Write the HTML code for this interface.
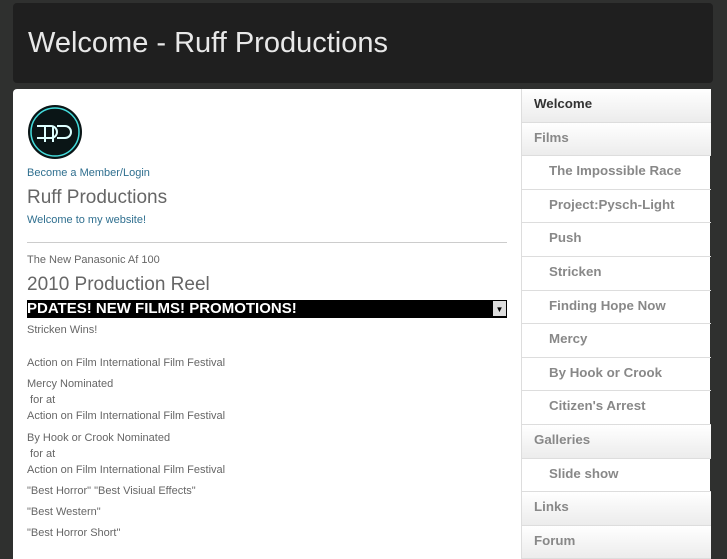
<!DOCTYPE html>
<html><head><style>
body{margin:0;width:727px;height:545px;overflow:hidden;background:#2f302f;font-family:"Liberation Sans",sans-serif;position:relative}
#hd{position:absolute;left:13px;top:3px;width:700px;height:80px;background:#1f1f1f;border-radius:4px}
#hd h1{margin:0;position:absolute;left:15px;top:24px;font-weight:normal;font-size:29px;color:#e8e8e8}
#ct{position:absolute;left:13px;top:89px;width:697px;height:470px;background:#fff;border-radius:4px 4px 0 0}
#main{position:absolute;left:14px;top:1px;width:480px;font-size:11px;color:#666}
a{color:#2f6f8f;text-decoration:none}
.t{position:absolute;left:0;white-space:nowrap}
#side{position:absolute;left:508px;top:0;width:189px;border-left:1px solid #ddd}
#side div{height:32.6px;line-height:29px;border-bottom:1px solid #ddd;font-weight:bold;font-size:13.3px;color:#888;padding-left:12px}
#side .g{background:linear-gradient(#fff,#ececec)}
#side .s{padding-left:27px}
</style></head><body>
<div id="hd"><h1>Welcome - Ruff Productions</h1></div>
<div id="ct">
<div id="main">
<svg class="t" style="top:14px" width="56" height="56" viewBox="0 0 56 56"><circle cx="28" cy="28" r="27" fill="#0a1516"/><circle cx="28" cy="28" r="24" fill="none" stroke="#4dd" stroke-width="1.5"/><path d="M10 22h14a6 6 0 0 1 0 12h-14M18 22v16M30 22h8a6 6 0 0 1 0 12h-8M26 22v16" fill="none" stroke="#dff" stroke-width="2"/></svg>
<div class="t" style="top:77px"><a>Become a Member/Login</a></div>
<div class="t" style="top:97px;font-size:19px;color:#666">Ruff Productions</div>
<div class="t" style="top:124px"><a>Welcome to my website!</a></div>
<div class="t" style="top:152px;width:480px;border-top:1px solid #ccc"></div>
<div class="t" style="top:164px">The New Panasonic Af 100</div>
<div class="t" style="top:184px;font-size:19px;color:#666">2010 Production Reel</div>
<div class="t" style="top:210px;width:480px;height:18px;background:#000;color:#fff;font-size:15px;font-weight:bold;line-height:18px;overflow:hidden">PDATES! NEW FILMS! PROMOTIONS!<span style="position:absolute;right:1px;top:1px;width:13px;height:15px;background:#ddd;color:#000;font-size:8px;text-align:center;font-weight:normal">▼</span></div>
<div class="t" style="top:234px">Stricken Wins!</div>
<div class="t" style="top:267px">Action on Film International Film Festival</div>
<div class="t" style="top:288px">Mercy Nominated</div>
<div class="t" style="top:304px">&nbsp;for at</div>
<div class="t" style="top:320px">Action on Film International Film Festival</div>
<div class="t" style="top:342px">By Hook or Crook Nominated</div>
<div class="t" style="top:358px">&nbsp;for at</div>
<div class="t" style="top:374px">Action on Film International Film Festival</div>
<div class="t" style="top:395px">"Best Horror" "Best Visiual Effects"</div>
<div class="t" style="top:416px">"Best Western"</div>
<div class="t" style="top:437px">"Best Horror Short"</div>
</div>
<div id="side">
<div class="g" style="color:#333">Welcome</div>
<div class="g">Films</div>
<div class="s">The Impossible Race</div>
<div class="s">Project:Pysch-Light</div>
<div class="s">Push</div>
<div class="s">Stricken</div>
<div class="s">Finding Hope Now</div>
<div class="s">Mercy</div>
<div class="s">By Hook or Crook</div>
<div class="s">Citizen's Arrest</div>
<div class="g">Galleries</div>
<div class="s">Slide show</div>
<div class="g">Links</div>
<div class="g">Forum</div>
</div>
</div>
</body></html>
